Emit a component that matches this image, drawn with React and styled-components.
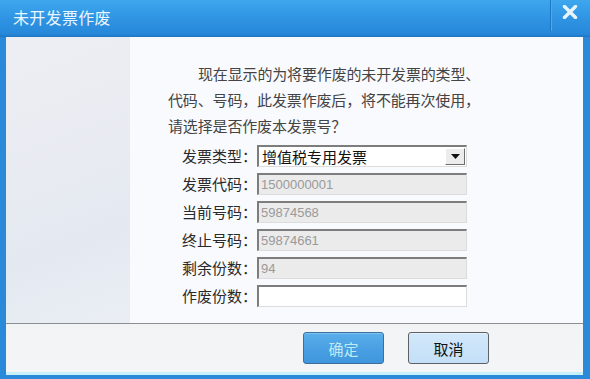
import React from "react";
import styled, { createGlobalStyle } from "styled-components";

const Global = createGlobalStyle`
  html, body { margin: 0; padding: 0; width: 590px; height: 379px; overflow: hidden; }
  body { font-family: "Noto Sans CJK SC", "Noto Sans", sans-serif; }
`;

const Window = styled.div`
  width: 590px;
  height: 379px;
  display: flex;
  flex-direction: column;
  background: #2a8ad9;
  box-sizing: border-box;
`;

const TitleBar = styled.div`
  height: 37px;
  flex: none;
  display: flex;
  align-items: stretch;
  background: linear-gradient(#3ea7ee 0%, #2f94e3 50%, #2788d9 92%, #1f74c0 100%);
`;

const Title = styled.div`
  flex: 1;
  padding-left: 13px;
  padding-top: 6px;
  font-size: 16px;
  line-height: 22px;
  color: #e9f5ff;
  letter-spacing: 0.3px;
`;

const CloseBox = styled.div`
  width: 38px;
  margin-right: 2px;
  height: 31px;
  border-left: 1px solid #1f77c4;
  box-shadow: inset 1px 0 0 #4aaaf0;
  display: flex;
  align-items: flex-start;
  justify-content: center;
  padding-top: 5px;
  box-sizing: border-box;
`;

const Frame = styled.div`
  flex: 1;
  display: flex;
  flex-direction: column;
  margin: 0 7px 4px 6px;
  background: #f4f6f8;
  border-bottom: 3px solid #c8f0fb;
`;

const Main = styled.div`
  height: 286px;
  display: flex;
  border-bottom: 1px solid #8a8f96;
`;

const SidePanel = styled.div`
  width: 124px;
  flex: none;
  background: linear-gradient(160deg, #eceef3 0%, #e8ebf1 45%, #e4e9f1 70%, #eaeef4 100%);
`;

const Content = styled.div`
  flex: 1;
  background: #f8fafd;
  padding: 24px 0 0 38px;
`;

const Message = styled.p`
  margin: 0;
  font-size: 15px;
  line-height: 26px;
  color: #444;
  white-space: nowrap;
  letter-spacing: -0.15px;
`;

const Indent = styled.span`
  padding-left: 30px;
`;

const Form = styled.div`
  margin-top: 6px;
  margin-left: 14px;
  display: grid;
  grid-template-columns: 75px 210px;
  row-gap: 6px;
`;

const Label = styled.div`
  height: 22px;
  font-size: 15px;
  line-height: 22px;
  color: #2a2a2a;
  white-space: nowrap;
`;

const Field = styled.div`
  height: 22px;
  box-sizing: border-box;
  border-top: 2px solid #7d7d7d;
  border-left: 2px solid #7d7d7d;
  border-right: 1px solid #dcdcdc;
  border-bottom: 1px solid #dcdcdc;
  background: ${(p) => (p.$disabled ? "#ebebeb" : "#ffffff")};
  font-family: "Liberation Sans", Arial, sans-serif;
  font-size: 13px;
  line-height: 19px;
  color: #9a9a9a;
  padding-left: 2px;
  display: flex;
  align-items: stretch;
`;

const SelectText = styled.div`
  flex: 1;
  font-family: "Noto Sans CJK SC", sans-serif;
  font-size: 15px;
  line-height: 19px;
  color: #111;
  padding-left: 1px;
`;

const ArrowBtn = styled.div`
  width: 20px;
  margin: 1px 1px 1px 0;
  box-sizing: border-box;
  border-top: 1px solid #ffffff;
  border-left: 1px solid #ffffff;
  border-right: 1px solid #6e6e6e;
  border-bottom: 1px solid #6e6e6e;
  background: #ececec;
  display: flex;
  align-items: center;
  justify-content: center;
`;

const Footer = styled.div`
  flex: 1;
  display: flex;
  align-items: flex-start;
  gap: 24px;
  padding: 8px 0 0 297px;
  background: linear-gradient(#f1f3f5, #f3f5f6);
`;

const Button = styled.button`
  width: 81px;
  height: 32px;
  border-radius: 3px;
  font-family: "Noto Sans CJK SC", sans-serif;
  font-size: 15px;
  padding: 0;
  border: 1px solid ${(p) => (p.$primary ? "#3c6f9c" : "#5d6066")};
  background: ${(p) =>
    p.$primary
      ? "linear-gradient(#5aaeea, #4aa0e3 50%, #3f96dc)"
      : "linear-gradient(#d3e8fa, #c3dff7)"};
  color: ${(p) => (p.$primary ? "#bfeaf4" : "#111")};
  box-shadow: inset 0 1px 0 ${(p) => (p.$primary ? "#7cc2f2" : "#e6f3fd")};
`;

const rows = [
  { label: "发票类型：", select: "增值税专用发票" },
  { label: "发票代码：", value: "1500000001", disabled: true },
  { label: "当前号码：", value: "59874568", disabled: true },
  { label: "终止号码：", value: "59874661", disabled: true },
  { label: "剩余份数：", value: "94", disabled: true },
  { label: "作废份数：", value: "" },
];

export default function App() {
  return (
    <>
      <Global />
      <Window>
        <TitleBar>
          <Title>未开发票作废</Title>
          <CloseBox>
            <svg width="16" height="14" viewBox="0 0 16 14">
              <path d="M2.5 1.5 L13.5 12.5 M13.5 1.5 L2.5 12.5" stroke="#e6f4fb" strokeWidth="3.4" strokeLinecap="round" />
            </svg>
          </CloseBox>
        </TitleBar>
        <Frame>
          <Main>
            <SidePanel />
            <Content>
              <Message>
                <Indent>现在显示的为将要作废的未开发票的类型、</Indent>
                <br />
                代码、号码，此发票作废后，将不能再次使用，
                <br />
                请选择是否作废本发票号？
              </Message>
              <Form>
                {rows.map((r) => (
                  <React.Fragment key={r.label}>
                    <Label>{r.label}</Label>
                    {r.select ? (
                      <Field>
                        <SelectText>{r.select}</SelectText>
                        <ArrowBtn>
                          <svg width="9" height="5" viewBox="0 0 9 5">
                            <path d="M0 0 H9 L4.5 5 Z" fill="#111" />
                          </svg>
                        </ArrowBtn>
                      </Field>
                    ) : (
                      <Field $disabled={r.disabled}>{r.value}</Field>
                    )}
                  </React.Fragment>
                ))}
              </Form>
            </Content>
          </Main>
          <Footer>
            <Button $primary>确定</Button>
            <Button>取消</Button>
          </Footer>
        </Frame>
      </Window>
    </>
  );
}
